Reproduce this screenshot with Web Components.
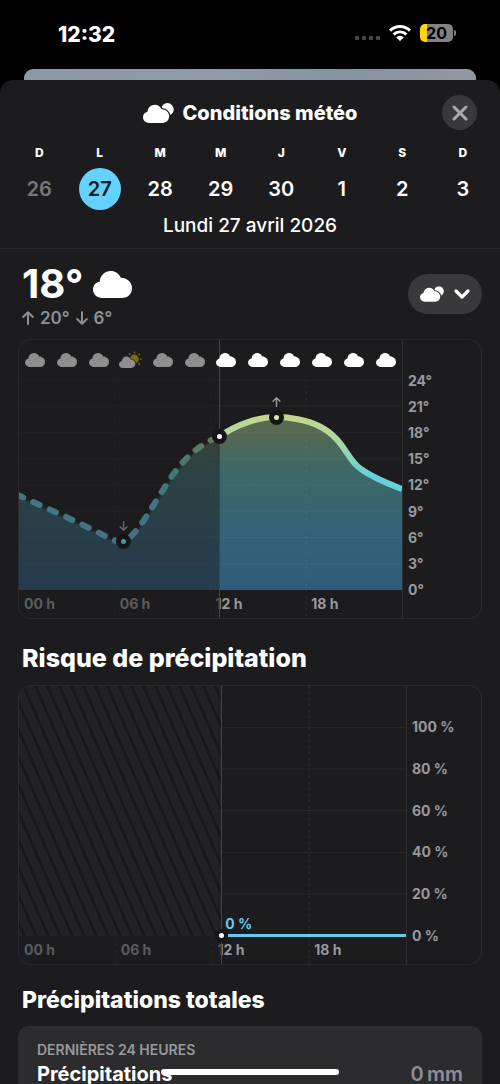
<!DOCTYPE html>
<html lang="fr">
<head>
<meta charset="utf-8">
<meta name="viewport" content="width=device-width, initial-scale=1">
<title>Conditions météo</title>
<style>
  html, body { height: 100%; }
  body {
    margin: 0;
    background: #000;
    color: #fff;
    font-family: Inter, "Noto Sans", sans-serif;
    --sheet: #1c1c1e;
    --line: #2b2b2d;
    --label: #98989d;
    --accent: #64d2ff;
  }
</style>
</head>
<body>
<weather-app></weather-app>

<script>
const define = (name, html, setup) => {
  const template = document.createElement("template");
  template.innerHTML = html;
  customElements.define(name, class extends HTMLElement {
    constructor() {
      super();
      this.attachShadow({ mode: "open" }).append(template.content.cloneNode(true));
    }
    connectedCallback() {
      if (setup && !this.ready) { this.ready = true; setup(this, this.shadowRoot); }
    }
  });
};

/* ---------- icons ---------- */
const CLOUD = "M9 27C4 27 0 23.4 0 18.6C0 14.4 2.9 11.2 6.8 10.5C7.1 4.6 11.8 0 17.8 0C22.3 0 26 2.6 27.8 6.8C34 6.9 39 11.4 39 17.2C39 22.8 34.8 27 29 27Z";
const ICONS = {
  "cloud": `<svg viewBox="0 0 39 27"><path fill="currentColor" d="${CLOUD}"/></svg>`,
  "cloud-moon": `<svg viewBox="0 0 31 20"><defs><mask id="m"><rect width="31" height="20" fill="#fff"/><path d="${CLOUD}" transform="translate(0 1.8) scale(.67)" fill="#000" stroke="#000" stroke-width="4"/></mask></defs><circle cx="24.4" cy="6.4" r="6.3" fill="currentColor" mask="url(#m)"/><path fill="currentColor" d="${CLOUD}" transform="translate(0 1.8) scale(.67)"/></svg>`,
  "cloud-sun": `<svg viewBox="0 0 24 18"><defs><mask id="m"><rect width="24" height="18" fill="#fff"/><path d="${CLOUD}" transform="translate(0 5.6) scale(.42)" fill="#000" stroke="#000" stroke-width="3"/></mask></defs><g mask="url(#m)" fill="#e0b800" stroke="#e0b800" stroke-linecap="round" stroke-width="1.6"><circle cx="15.4" cy="8" r="3.6"/><path d="M15.4 1.8V1.4M19.9 3.5L20.3 3.1M21.7 8H22.2M19.9 12.5L20.3 12.9M15.4 14.2V14.6M10.9 3.5L10.5 3.1"/></g><path fill="currentColor" d="${CLOUD}" transform="translate(0 5.6) scale(.42)"/></svg>`,
  "up": `<svg viewBox="0 0 12 14"><path d="M6 13V1.4M1.2 6L6 1.2L10.8 6" fill="none" stroke="currentColor" stroke-width="2" stroke-linecap="round" stroke-linejoin="round"/></svg>`,
  "down": `<svg viewBox="0 0 12 14"><path d="M6 1V12.6M1.2 8L6 12.8L10.8 8" fill="none" stroke="currentColor" stroke-width="2" stroke-linecap="round" stroke-linejoin="round"/></svg>`,
  "close": `<svg viewBox="0 0 16 16"><path d="M2 2L14 14M14 2L2 14" stroke="currentColor" stroke-width="3" stroke-linecap="round"/></svg>`,
  "chevron": `<svg viewBox="0 0 16 10"><path d="M2 2L8 8L14 2" fill="none" stroke="currentColor" stroke-width="3.2" stroke-linecap="round" stroke-linejoin="round"/></svg>`,
  "wifi": `<svg viewBox="0 0 22 16"><g fill="none" stroke="currentColor" stroke-width="2.9"><path d="M1 5.6A14.2 14.2 0 0 1 21 5.6"/><path d="M4.6 9.5A9.1 9.1 0 0 1 17.4 9.5"/></g><path fill="currentColor" d="M11 16L7.2 12.4A5.4 5.4 0 0 1 14.8 12.4Z"/></svg>`
};
define("app-icon", `
  <style>:host { display: block; flex: none; } div { width: 100%; height: 100%; } svg { display: block; width: 100%; height: 100%; overflow: visible; }</style>
  <div aria-hidden="true"></div>`,
  (el, root) => { root.querySelector("div").innerHTML = ICONS[el.getAttribute("name")]; });

/* ---------- system bars ---------- */
define("status-bar", `
  <style>
    :host { display: flex; align-items: center; justify-content: space-between; height: 69px; padding: 0 44px 0 58px; }
    time { font-size: 21px; font-weight: 800; line-height: 24px; }
    .right { display: flex; align-items: center; gap: 9px; height: 66px; align-self: flex-start; }
    .cell { display: flex; gap: 3px; padding-top: 10px; }
    .cell i { width: 4px; height: 4px; border-radius: 1px; background: #48484a; }
    app-icon { width: 22px; height: 16px; }
    .battery { display: flex; align-items: center; gap: 1px; }
    .body { width: 33px; height: 18px; border-radius: 5px; background: linear-gradient(90deg, #ffd60a 7px, #828285 7px);
      color: #000; font-size: 16px; font-weight: 700; line-height: 18px; text-align: center; }
    .nub { width: 2px; height: 6px; border-radius: 0 2px 2px 0; background: #828285; }
  </style>
  <time>12:32</time>
  <div class="right">
    <span class="cell"><i></i><i></i><i></i><i></i></span>
    <app-icon name="wifi"></app-icon>
    <span class="battery"><span class="body">20</span><span class="nub"></span></span>
  </div>`);

define("home-indicator", `
  <style>:host { display: block; position: fixed; bottom: 9px; left: 50%; width: 178px; height: 6px; margin-left: -89px; border-radius: 3px; background: #fff; }</style>`);

/* ---------- sheet header ---------- */
define("day-button", `
  <style>
    :host { display: block; }
    button { all: unset; display: grid; justify-items: center; gap: 7px; width: 100%; cursor: pointer; }
    .letter { font-size: 12px; font-weight: 800; line-height: 16px; }
    .num { width: 42px; border-radius: 50%; font-size: 20px; font-weight: 600; line-height: 42px; text-align: center; }
    :host([past]) .num { color: #77777a; }
    :host([selected]) .num { background: var(--accent); color: #0c1a26; }
  </style>
  <button type="button"><span class="letter"></span><span class="num"><slot></slot></span></button>`,
  (el, root) => {
    root.querySelector(".letter").textContent = el.getAttribute("letter");
    root.querySelector("button").setAttribute("aria-pressed", el.hasAttribute("selected"));
  });

define("sheet-header", `
  <style>
    :host { display: block; padding: 15px 0 10px; border-bottom: 1px solid var(--line); }
    .title { display: grid; grid-template-columns: 35px 1fr 35px; align-items: center; padding: 0 23px; }
    h1 { grid-column: 2; display: flex; align-items: center; justify-content: center; gap: 9px; margin: 0; font-size: 20px; font-weight: 800; line-height: 24px; }
    h1 app-icon { width: 31px; height: 20px; }
    .close { display: grid; place-items: center; width: 35px; height: 35px; padding: 0; border: 0; border-radius: 50%; background: #39393c; color: #a9a9ae; }
    .close app-icon { width: 16px; height: 16px; }
    .days { display: grid; grid-template-columns: repeat(8, 1fr); margin: 15px 7px 4px 9px; }
    p { margin: 0; font-size: 19px; font-weight: 500; line-height: 24px; text-align: center; }
  </style>
  <div class="title">
    <h1><app-icon name="cloud-moon"></app-icon>Conditions météo</h1>
    <button class="close" type="button" aria-label="Fermer"><app-icon name="close"></app-icon></button>
  </div>
  <div class="days">
    <day-button letter="D" past>26</day-button>
    <day-button letter="L" selected>27</day-button>
    <day-button letter="M">28</day-button>
    <day-button letter="M">29</day-button>
    <day-button letter="J">30</day-button>
    <day-button letter="V">1</day-button>
    <day-button letter="S">2</day-button>
    <day-button letter="D">3</day-button>
  </div>
  <p>Lundi 27 avril 2026</p>`);

/* ---------- current conditions ---------- */
define("current-conditions", `
  <style>
    :host { display: flex; align-items: center; justify-content: space-between; padding: 13px 0 9px 4px; }
    .now { display: flex; align-items: center; gap: 10px; font-size: 40px; font-weight: 700; line-height: 44px; }
    .now app-icon { width: 39px; height: 27px; }
    .range { display: flex; align-items: center; gap: 6px; color: #8e8e93; font-size: 17px; font-weight: 600; line-height: 24px; }
    .range app-icon { width: 12px; height: 14px; }
    button { display: flex; align-items: center; gap: 10px; height: 40px; margin-bottom: 4px; padding: 0 12px; border: 0; border-radius: 20px; background: #39393c; color: #fff; }
    .kind { width: 24px; height: 16px; }
    .chev { width: 16px; height: 10px; }
  </style>
  <div>
    <div class="now">18° <app-icon name="cloud"></app-icon></div>
    <div class="range"><app-icon name="up"></app-icon>20° <app-icon name="down"></app-icon>6°</div>
  </div>
  <button type="button" aria-haspopup="menu" aria-label="Type de conditions"><app-icon class="kind" name="cloud-moon"></app-icon><app-icon class="chev" name="chevron"></app-icon></button>`);

/* ---------- shared chart frame ---------- */
define("chart-frame", `
  <style>
    :host { display: grid; grid-template-columns: 1fr var(--axis-width); height: 278px; border: 1px solid var(--line); border-radius: 13px; overflow: hidden; }
    .plot { position: relative; display: grid; grid-template: 278px / 100%; }
    .hours, .shade, ::slotted(*) { grid-area: 1 / 1; }
    .hours { align-self: end; display: grid; grid-template-columns: repeat(4, 1fr); height: 28px; }
    .hours span { padding-left: 5px; color: var(--label); font-size: 14px; font-weight: 700; line-height: 28px; white-space: nowrap; }
    .shade { width: 52.5%; background: #1c1c1e80; border-right: 1px solid #444446; box-sizing: border-box; }
    .axis { display: grid; align-content: start; grid-auto-rows: 1fr; height: var(--axis-height); padding: var(--axis-top) 0 278px 5px; border-left: 1px solid #303032; color: var(--label); font-size: 14px; font-weight: 700; }
    .axis span { display: flex; align-items: center; }
  </style>
  <div class="plot">
    <slot></slot>
    <div class="hours"><span>00 h</span><span>06 h</span><span>12 h</span><span>18 h</span></div>
    <div class="shade"></div>
    <slot name="over"></slot>
  </div>
  <div class="axis"></div>`,
  (el, root) => {
    for (const t of el.getAttribute("ticks").split(",")) {
      const s = document.createElement("span");
      s.textContent = t;
      root.querySelector(".axis").append(s);
    }
  });

const rules = (w, ys) => ys.map(y => `<path d="M0 ${y}H${w}"/>`).join("");
const columns = w => [1, 2, 3].map(i => `<path stroke-dasharray="2 4" d="M${w * i / 4} 40V278"/>`).join("");

/* ---------- temperature ---------- */
const PAST = "M-2 154.5C20 165 60 182 90 198C98 202 104 203 109 199C122 188 132 168 146 147C160 123 178 105 200.5 96.5";
const NEXT = "M200.5 96.5C218 84 240 77 257.5 77C270 77 288 80 300 86C326 99 328 121 342 129C354 138 370 144 383 149";
define("temperature-chart", `
  <style>
    :host { display: block; }
    chart-frame { --axis-width: 79px; --axis-top: 27px; --axis-height: 236px; }
    svg { display: block; width: 100%; height: 278px; }
    path { vector-effect: non-scaling-stroke; }
    .icons { align-self: start; display: grid; grid-template-columns: repeat(12, 1fr); place-items: center; height: 40px; }
    .icons app-icon { width: 20px; height: 14px; }
    .icons app-icon[name="cloud-sun"] { width: 24px; height: 18px; }
    .icons app-icon:nth-child(-n+6) { opacity: .5; }
    .dot { position: absolute; width: 5px; height: 5px; margin: -7px 0 0 -7px; border: 5px solid #161617; border-radius: 50%; background: #fff; }
    .arrow { position: absolute; width: 9px; height: 10px; margin-left: -4px; color: var(--label); }
    .now { left: 52.2%; top: 96px; }
    .max { left: 67.1%; top: 77px; background: #dfe9ae; }
    .min { left: 27.2%; top: 201px; background: #4b97a9; }
    .arrow.max { top: 57px; background: none; }
    .arrow.min { top: 181px; background: none; color: #666669; }
  </style>
  <chart-frame ticks="24°,21°,18°,15°,12°,9°,6°,3°,0°">
    <svg viewBox="0 0 383 278" preserveAspectRatio="none" role="img" aria-label="Température">
      <defs>
        <linearGradient id="area" gradientUnits="userSpaceOnUse" x1="0" y1="77" x2="0" y2="250">
          <stop offset="0" stop-color="#626a50"/><stop offset=".14" stop-color="#506856"/><stop offset=".32" stop-color="#3c6868"/>
          <stop offset=".5" stop-color="#38656b"/><stop offset=".62" stop-color="#366374"/><stop offset="1" stop-color="#2e5c7c"/>
        </linearGradient>
        <linearGradient id="stroke" gradientUnits="userSpaceOnUse" x1="0" y1="77" x2="0" y2="210">
          <stop offset="0" stop-color="#c3d78e"/><stop offset=".14" stop-color="#b2d69e"/><stop offset=".34" stop-color="#7fd5c2"/>
          <stop offset=".46" stop-color="#62d1d8"/><stop offset=".6" stop-color="#6ad2e2"/><stop offset="1" stop-color="#6ac4ea"/>
        </linearGradient>
      </defs>
      <path fill="url(#area)" d="${PAST}${NEXT.replace(/^M[\d.]+ [\d.]+/, "")}V250H-2Z"/>
      <g stroke="#fff" stroke-opacity=".04">${rules(383, [40, 66, 92.5, 119, 145, 171, 197.5, 224])}</g>
      <g stroke="#fff" stroke-opacity=".08">${columns(383)}</g>
      <path fill="none" stroke="#1c1c1e" stroke-opacity=".6" stroke-width="4" d="${PAST}"/>
      <path fill="none" stroke="url(#stroke)" stroke-width="6" stroke-linecap="round" stroke-dasharray="7 11" d="${PAST}"/>
      <path fill="none" stroke="url(#stroke)" stroke-width="6" d="${NEXT}"/>
    </svg>
    <div slot="over" class="icons"></div>
    <span slot="over" class="dot now"></span>
    <span slot="over" class="dot max"></span>
    <span slot="over" class="dot min"></span>
    <app-icon slot="over" class="arrow max" name="up"></app-icon>
    <app-icon slot="over" class="arrow min" name="down"></app-icon>
  </chart-frame>`,
  (el, root) => {
    root.querySelector(".icons").innerHTML =
      Array.from({ length: 12 }, (_, i) => `<app-icon name="${i === 3 ? "cloud-sun" : "cloud"}"></app-icon>`).join("");
  });

/* ---------- chance of rain ---------- */
define("rain-chart", `
  <style>
    :host { display: block; }
    chart-frame { --axis-width: 75px; --axis-top: 20px; --axis-height: 250px; }
    svg { display: block; width: 100%; height: 278px; }
    path { vector-effect: non-scaling-stroke; }
    .hatch { width: 52.2%; height: 250px; }
    .line { align-self: start; justify-self: end; width: 46%; height: 3px; margin-top: 248px; background: #6ac8ec; }
    .dot { position: absolute; left: 52.2%; top: 249px; width: 5px; height: 5px; margin: -6px 0 0 -6px; border: 4px solid #161617; border-radius: 50%; background: #fff; }
    .value { position: absolute; left: 53.3%; top: 228px; color: #6ac8ec; font-size: 14px; font-weight: 700; line-height: 20px; }
  </style>
  <chart-frame ticks="100 %,80 %,60 %,40 %,20 %,0 %">
    <svg viewBox="0 0 387 278" preserveAspectRatio="none" role="img" aria-label="Risque de précipitation">
      <g stroke="#fff" stroke-opacity=".05">${rules(387, [41.5, 83, 124.5, 166.5, 208, 249.5])}</g>
      <g stroke="#fff" stroke-opacity=".1">${columns(387).replaceAll(" 40V", " 0V")}</g>
    </svg>
    <svg slot="over" class="hatch" aria-hidden="true">
      <defs><pattern id="h" width="12" height="12" patternUnits="userSpaceOnUse" patternTransform="skewX(23.5)"><rect width="12" height="12" fill="#232325" fill-opacity=".8"/><rect x="3" width="3" height="12" fill="#18181b"/></pattern></defs>
      <rect width="100%" height="100%" fill="url(#h)"/>
    </svg>
    <span slot="over" class="line"></span>
    <span slot="over" class="dot"></span>
    <span slot="over" class="value">0 %</span>
  </chart-frame>`);

/* ---------- totals ---------- */
define("totals-card", `
  <style>
    :host { display: block; padding: 14px 19px; border-radius: 11px; background: #2c2c2e; }
    h3 { margin: 0; color: var(--label); font-size: 14px; font-weight: 600; line-height: 20px; }
    dl { display: flex; justify-content: space-between; margin: 1px 0 0; font-size: 20px; line-height: 26px; }
    dt { font-weight: 700; }
    dd { margin: 0; color: #8e8e93; font-weight: 600; }
  </style>
  <h3>DERNIÈRES 24 HEURES</h3>
  <dl><dt>Précipitations</dt><dd>0&#8239;mm</dd></dl>`);

/* ---------- page ---------- */
define("weather-app", `
  <style>
    :host { display: flex; flex-direction: column; height: 100vh; }
    .behind { height: 11px; margin: 0 24px; border-radius: 9px 9px 0 0; background: linear-gradient(90deg, #8c98a2, #909aa6 45%, #8693a0 70%, #9298a0); }
    .sheet { flex: 1; min-height: 0; overflow-y: auto; scrollbar-width: none; border-radius: 13px 13px 0 0; background: var(--sheet); }
    main { padding: 0 18px 40px; }
    h2 { margin: 24px 4px 12px; font-size: 25px; font-weight: 800; line-height: 30px; }
    h2.small { margin-top: 21px; font-size: 23px; line-height: 28px; }
  </style>
  <status-bar></status-bar>
  <div class="behind"></div>
  <div class="sheet">
    <sheet-header></sheet-header>
    <main>
      <current-conditions></current-conditions>
      <temperature-chart></temperature-chart>
      <h2>Risque de précipitation</h2>
      <rain-chart></rain-chart>
      <h2 class="small">Précipitations totales</h2>
      <totals-card></totals-card>
    </main>
  </div>
  <home-indicator></home-indicator>`);
</script>
</body>
</html>
